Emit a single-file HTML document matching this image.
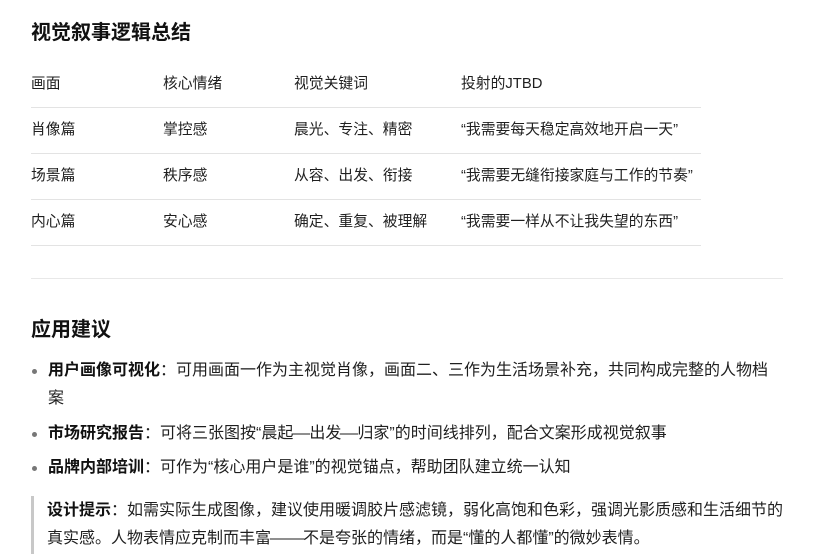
<!DOCTYPE html>
<html><head><meta charset="utf-8"><style>
body{margin:0;background:#fff;width:823px;height:560px;overflow:hidden;font-family:"Liberation Sans","Noto Sans CJK SC",sans-serif;color:#1f1f1f;position:relative}
.a{position:absolute;white-space:nowrap}
h1,h2{margin:0;font-size:20px;font-weight:bold;position:absolute;left:31px;color:#111}
.t{font-size:14.8px;line-height:20px}
.line{position:absolute;left:31px;width:670px;height:1px;background:#e3e3e3}
.li{position:absolute;left:48px;font-size:16px;line-height:28px;width:740px}
.dot{position:absolute;left:32px;width:5px;height:5px;border-radius:50%;background:#777}
b{color:#111}
.d{display:inline-block;width:16px;text-align:center;transform:scaleX(1.15)}
</style></head><body>
<h1 style="top:16px">视觉叙事逻辑总结</h1>
<div class="a t" style="left:31px;top:74px">画面</div><div class="a t" style="left:163px;top:74px">核心情绪</div><div class="a t" style="left:294px;top:74px">视觉关键词</div><div class="a t" style="left:461px;top:74px">投射的JTBD</div>
<div class="line" style="top:107px"></div>
<div class="a t" style="left:31px;top:120px">肖像篇</div><div class="a t" style="left:163px;top:120px">掌控感</div><div class="a t" style="left:294px;top:120px">晨光、专注、精密</div><div class="a t" style="left:461px;top:120px">“我需要每天稳定高效地开启一天”</div>
<div class="line" style="top:153px"></div>
<div class="a t" style="left:31px;top:166px">场景篇</div><div class="a t" style="left:163px;top:166px">秩序感</div><div class="a t" style="left:294px;top:166px">从容、出发、衔接</div><div class="a t" style="left:461px;top:166px">“我需要无缝衔接家庭与工作的节奏”</div>
<div class="line" style="top:199px"></div>
<div class="a t" style="left:31px;top:212px">内心篇</div><div class="a t" style="left:163px;top:212px">安心感</div><div class="a t" style="left:294px;top:212px">确定、重复、被理解</div><div class="a t" style="left:461px;top:212px">“我需要一样从不让我失望的东西”</div>
<div class="line" style="top:245px"></div>
<div style="position:absolute;left:31px;top:278px;width:752px;height:1px;background:#e8e8e8"></div>
<h2 style="top:313px">应用建议</h2>
<div class="dot" style="top:369px"></div>
<div class="li" style="top:357px;width:735px"><b>用户画像可视化</b>：可用画面一作为主视觉肖像，画面二、三作为生活场景补充，共同构成完整的人物档案</div>
<div class="dot" style="top:432px"></div>
<div class="li" style="top:420px;white-space:nowrap"><b>市场研究报告</b>：可将三张图按“晨起<span class="d">—</span>出发<span class="d">—</span>归家”的时间线排列，配合文案形成视觉叙事</div>
<div class="dot" style="top:466px"></div>
<div class="li" style="top:454px;white-space:nowrap"><b>品牌内部培训</b>：可作为“核心用户是谁”的视觉锚点，帮助团队建立统一认知</div>
<div style="position:absolute;left:31px;top:496px;width:3px;height:58px;background:#c8c8c8"></div>
<div class="li" style="left:47px;top:497px;width:745px"><b>设计提示</b>：如需实际生成图像，建议使用暖调胶片感滤镜，弱化高饱和色彩，强调光影质感和生活细节的真实感。人物表情应克制而丰富<span class="d">—</span><span class="d">—</span>不是夸张的情绪，而是“懂的人都懂”的微妙表情。</div>
</body></html>
